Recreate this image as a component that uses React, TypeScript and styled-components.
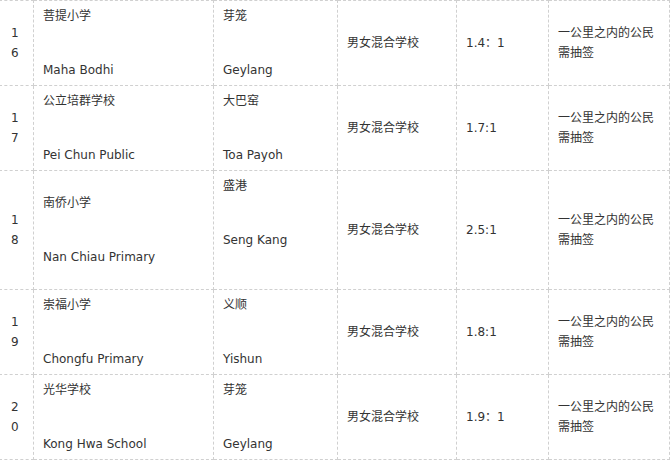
import React from "react";
import { createGlobalStyle, styled } from "styled-components";

type School = {
  no: string;
  cn: string;
  en: string;
  areaCn: string;
  areaEn: string;
  ratio: string;
  tallArea?: boolean;
};

const schools: School[] = [
  { no: "16", cn: "菩提小学", en: "Maha Bodhi", areaCn: "芽笼", areaEn: "Geylang", ratio: "1.4：1" },
  { no: "17", cn: "公立培群学校", en: "Pei Chun Public", areaCn: "大巴窑", areaEn: "Toa Payoh", ratio: "1.7:1" },
  { no: "18", cn: "南侨小学", en: "Nan Chiau Primary", areaCn: "盛港", areaEn: "Seng Kang", ratio: "2.5:1", tallArea: true },
  { no: "19", cn: "崇福小学", en: "Chongfu Primary", areaCn: "义顺", areaEn: "Yishun", ratio: "1.8:1" },
  { no: "20", cn: "光华学校", en: "Kong Hwa School", areaCn: "芽笼", areaEn: "Geylang", ratio: "1.9：1" },
];

const App = () => {
  return (
    <>
      <GlobalStyle />
      <Table>
        <colgroup>
          <col style={{ width: 34 }} />
          <col style={{ width: 180 }} />
          <col style={{ width: 124 }} />
          <col style={{ width: 119 }} />
          <col style={{ width: 92 }} />
          <col style={{ width: 121 }} />
        </colgroup>
        <tbody>
          {schools.map((s) => (
            <tr key={s.no}>
              <NumCell>
                {s.no.split("").map((d, i) => (
                  <Digit key={i}>{d}</Digit>
                ))}
              </NumCell>
              <Cell>
                <NameStack>
                  <Line>{s.cn}</Line>
                  <Line>{s.en}</Line>
                </NameStack>
              </Cell>
              <Cell>
                <NameStack $extra={s.tallArea}>
                  <Line>{s.areaCn}</Line>
                  <Line>{s.areaEn}</Line>
                </NameStack>
              </Cell>
              <Cell>男女混合学校</Cell>
              <Cell>{s.ratio}</Cell>
              <NoteCell>
                一公里之内的公民
                <br />
                需抽签
              </NoteCell>
            </tr>
          ))}
        </tbody>
      </Table>
    </>
  );
};

const GlobalStyle = createGlobalStyle`
  body {
    margin: 0;
    background: #ffffff;
    overflow: hidden;
  }
`;

const Table = styled.table`
  border-collapse: collapse;
  table-layout: fixed;
  width: 670px;
  margin-left: -1px;

  font-family: "DejaVu Sans", "Noto Sans CJK SC", sans-serif;
  font-size: 12px;
  color: #333333;
`;

const Cell = styled.td`
  border: 1px dashed #d0d0d0;
  padding: 6px 9px;
  vertical-align: middle;
  line-height: 18px;
  white-space: nowrap;
`;

const NumCell = styled(Cell)`
  padding-left: 11px;
  line-height: 20px;
`;

const Digit = styled.div`
  display: block;
`;

const NoteCell = styled(Cell)`
  line-height: 20px;
`;

const NameStack = styled.div<{ $extra?: boolean }>`
  display: flex;
  flex-direction: column;
  gap: 36px;
  padding-bottom: ${(p) => (p.$extra ? "34px" : "0")};
`;

const Line = styled.div`
  height: 18px;
`;

export default App;
